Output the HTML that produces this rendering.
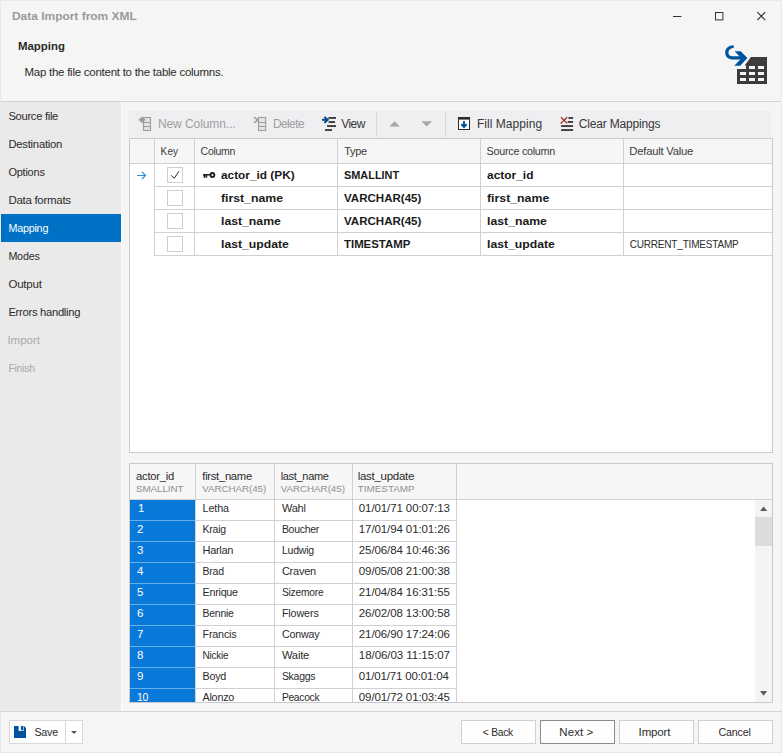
<!DOCTYPE html>
<html><head><meta charset="utf-8"><title>Data Import from XML</title>
<style>
html,body{margin:0;padding:0;}
body{width:782px;height:753px;overflow:hidden;background:#f5f5f5;font-family:"Liberation Sans","DejaVu Sans",sans-serif;font-size:11.5px;color:#222;position:relative;}
.a{position:absolute;}
.t{position:absolute;white-space:nowrap;line-height:16px;height:16px;}
.v{position:absolute;width:1px;background:#d0d0d5;}
.h{position:absolute;height:1px;background:#d0d0d5;}
.btn{position:absolute;box-sizing:border-box;background:#fefefe;border:1px solid #d0d0d0;}
svg{position:absolute;left:0;top:0;}
</style></head><body>
<!-- header -->
<div class="a" style="left:0;top:0;width:782px;height:101px;background:#f5f5f5;"></div>
<div class="h" style="left:0;top:101px;width:781px;background:#d2d2d2;"></div>
<div class="a" style="left:0;top:0;width:782px;height:753px;box-sizing:border-box;border:1px solid #e9e9e9;"></div>
<!-- sidebar -->
<div class="a" style="left:1px;top:102px;width:120px;height:609px;background:#eaeaea;"></div>
<div class="a" style="left:121px;top:102px;width:2px;height:609px;background:#fafafa;"></div>
<div class="a" style="left:1px;top:214px;width:120px;height:28px;background:#0072c6;"></div>
<!-- toolbar -->
<div class="a" style="left:128px;top:111px;width:643px;height:27px;background:#efeff1;"></div>
<div class="v" style="left:376px;top:112px;height:25px;background:#d9d9d9;"></div>
<div class="v" style="left:445px;top:112px;height:25px;background:#d9d9d9;"></div>
<!-- top grid -->
<div class="a" style="left:129px;top:138px;width:644px;height:315px;box-sizing:border-box;border:1px solid #cacace;background:#fff;"></div>
<div class="a" style="left:130px;top:139px;width:642px;height:24px;background:#f6f6f6;"></div>
<div class="h" style="left:130px;top:163px;width:642px;"></div>
<div class="h" style="left:154px;top:186px;width:618px;"></div>
<div class="h" style="left:154px;top:209px;width:618px;"></div>
<div class="h" style="left:154px;top:232px;width:618px;"></div>
<div class="h" style="left:154px;top:255px;width:618px;"></div>
<div class="v" style="left:154px;top:139px;height:117px;"></div>
<div class="v" style="left:194px;top:139px;height:117px;"></div>
<div class="v" style="left:337px;top:139px;height:117px;"></div>
<div class="v" style="left:480px;top:139px;height:117px;"></div>
<div class="v" style="left:623px;top:139px;height:117px;"></div>
<!-- checkboxes -->
<div class="a" style="left:167px;top:167px;width:16px;height:16px;box-sizing:border-box;border:1px solid #cecece;background:#fff;"></div>
<div class="a" style="left:167px;top:190px;width:16px;height:16px;box-sizing:border-box;border:1px solid #cecece;background:#fff;"></div>
<div class="a" style="left:167px;top:213px;width:16px;height:16px;box-sizing:border-box;border:1px solid #cecece;background:#fff;"></div>
<div class="a" style="left:167px;top:236px;width:16px;height:16px;box-sizing:border-box;border:1px solid #cecece;background:#fff;"></div>
<!-- lower grid -->
<div class="a" style="left:129px;top:463px;width:644px;height:240px;box-sizing:border-box;border:1px solid #cacace;background:#fff;"></div>
<div class="a" style="left:130px;top:464px;width:642px;height:35px;background:#f6f6f6;"></div>
<div class="h" style="left:130px;top:499px;width:642px;"></div>
<div class="a" style="left:130px;top:500px;width:65px;height:202px;background:#0879d8;"></div>
<div id="rl"></div>
<div class="v" style="left:195px;top:464px;height:238px;"></div>
<div class="v" style="left:274px;top:464px;height:238px;"></div>
<div class="v" style="left:352px;top:464px;height:238px;"></div>
<div class="v" style="left:456px;top:464px;height:238px;"></div>
<!-- scrollbar -->
<div class="a" style="left:755px;top:500px;width:17px;height:202px;background:#f4f4f4;"></div>
<div class="a" style="left:755px;top:517px;width:17px;height:29px;background:#dcdcdf;"></div>
<!-- footer -->
<div class="h" style="left:0;top:711px;width:782px;background:#d6d6d6;"></div>
<div class="btn" style="left:9px;top:720px;width:74px;height:24px;border-color:#d8d8d8;"></div>
<div class="v" style="left:65px;top:721px;height:22px;background:#d8d8d8;"></div>
<div class="btn" style="left:461px;top:720px;width:75px;height:24px;"></div>
<div class="btn" style="left:540px;top:720px;width:75px;height:24px;border-color:#8a8a8a;"></div>
<div class="btn" style="left:619px;top:720px;width:75px;height:24px;"></div>
<div class="btn" style="left:698px;top:720px;width:75px;height:24px;"></div>
<div class="h" style="left:195px;top:520px;width:261px;"></div>
<div class="h" style="left:130px;top:520px;width:65px;background:#62b1ec;"></div>
<div class="h" style="left:195px;top:541px;width:261px;"></div>
<div class="h" style="left:130px;top:541px;width:65px;background:#62b1ec;"></div>
<div class="h" style="left:195px;top:562px;width:261px;"></div>
<div class="h" style="left:130px;top:562px;width:65px;background:#62b1ec;"></div>
<div class="h" style="left:195px;top:583px;width:261px;"></div>
<div class="h" style="left:130px;top:583px;width:65px;background:#62b1ec;"></div>
<div class="h" style="left:195px;top:604px;width:261px;"></div>
<div class="h" style="left:130px;top:604px;width:65px;background:#62b1ec;"></div>
<div class="h" style="left:195px;top:625px;width:261px;"></div>
<div class="h" style="left:130px;top:625px;width:65px;background:#62b1ec;"></div>
<div class="h" style="left:195px;top:646px;width:261px;"></div>
<div class="h" style="left:130px;top:646px;width:65px;background:#62b1ec;"></div>
<div class="h" style="left:195px;top:667px;width:261px;"></div>
<div class="h" style="left:130px;top:667px;width:65px;background:#62b1ec;"></div>
<div class="h" style="left:195px;top:688px;width:261px;"></div>
<div class="h" style="left:130px;top:688px;width:65px;background:#62b1ec;"></div>
<div class="t" style="left:11.90px;top:8.00px;font-size:11.5px;letter-spacing:0.000px;color:#9a9a9a;font-weight:bold;transform:scaleX(1.0384);transform-origin:0 12.00px;">Data Import from XML</div>
<div class="t" style="left:17.60px;top:38.30px;font-size:11.5px;letter-spacing:0.000px;color:#2c2c2c;font-weight:bold;transform:scaleX(0.9927);transform-origin:0 12.00px;">Mapping</div>
<div class="t" style="left:24.50px;top:63.80px;font-size:11.5px;letter-spacing:-0.258px;color:#2c2c2c;">Map the file content to the table columns.</div>
<div class="t" style="left:8.40px;top:107.90px;font-size:11.25px;letter-spacing:-0.320px;color:#2c2c2c;transform:scaleY(1.0222);transform-origin:0 12.00px;">Source file</div>
<div class="t" style="left:8.40px;top:135.90px;font-size:11.25px;letter-spacing:-0.233px;color:#2c2c2c;transform:scaleY(1.0222);transform-origin:0 12.00px;">Destination</div>
<div class="t" style="left:8.40px;top:163.90px;font-size:11px;letter-spacing:-0.235px;color:#2c2c2c;transform:scaleY(1.0455);transform-origin:0 12.00px;">Options</div>
<div class="t" style="left:8.40px;top:191.90px;font-size:11.5px;letter-spacing:-0.289px;color:#2c2c2c;">Data formats</div>
<div class="t" style="left:8.40px;top:219.90px;font-size:10.75px;letter-spacing:-0.210px;color:#fff;transform:scaleY(1.0698);transform-origin:0 12.00px;">Mapping</div>
<div class="t" style="left:8.40px;top:247.90px;font-size:10.75px;letter-spacing:-0.223px;color:#2c2c2c;transform:scaleY(1.0698);transform-origin:0 12.00px;">Modes</div>
<div class="t" style="left:8.40px;top:275.90px;font-size:11.5px;letter-spacing:-0.185px;color:#2c2c2c;">Output</div>
<div class="t" style="left:8.40px;top:303.90px;font-size:11.25px;letter-spacing:-0.302px;color:#2c2c2c;transform:scaleY(1.0222);transform-origin:0 12.00px;">Errors handling</div>
<div class="t" style="left:7.40px;top:331.90px;font-size:11.5px;letter-spacing:0.001px;color:#a9a9a9;">Import</div>
<div class="t" style="left:8.40px;top:359.90px;font-size:10.5px;letter-spacing:-0.274px;color:#a9a9a9;transform:scaleY(1.0952);transform-origin:0 12.00px;">Finish</div>
<div class="t" style="left:157.90px;top:115.50px;font-size:12px;letter-spacing:-0.071px;color:#9e9e9e;">New Column...</div>
<div class="t" style="left:272.90px;top:115.50px;font-size:12px;letter-spacing:-0.603px;color:#9e9e9e;">Delete</div>
<div class="t" style="left:341.30px;top:115.50px;font-size:12px;letter-spacing:-0.576px;color:#363636;">View</div>
<div class="t" style="left:476.90px;top:115.50px;font-size:12px;letter-spacing:0.044px;color:#363636;">Fill Mapping</div>
<div class="t" style="left:578.80px;top:115.50px;font-size:12px;letter-spacing:-0.180px;color:#363636;">Clear Mappings</div>
<div class="t" style="left:160.60px;top:143.80px;font-size:10px;letter-spacing:0.134px;color:#3c3c3c;transform:scaleY(1.1500);transform-origin:0 11.00px;">Key</div>
<div class="t" style="left:200.60px;top:142.80px;font-size:10.5px;letter-spacing:-0.288px;color:#3c3c3c;transform:scaleY(1.0952);transform-origin:0 12.00px;">Column</div>
<div class="t" style="left:344.20px;top:142.80px;font-size:11px;letter-spacing:-0.310px;color:#3c3c3c;transform:scaleY(1.0455);transform-origin:0 12.00px;">Type</div>
<div class="t" style="left:486.60px;top:142.80px;font-size:10.75px;letter-spacing:-0.252px;color:#3c3c3c;transform:scaleY(1.0698);transform-origin:0 12.00px;">Source column</div>
<div class="t" style="left:629.30px;top:142.80px;font-size:11.25px;letter-spacing:-0.221px;color:#3c3c3c;transform:scaleY(1.0222);transform-origin:0 12.00px;">Default Value</div>
<div class="t" style="left:221.30px;top:166.60px;font-size:11.5px;letter-spacing:0.000px;color:#1a1a1a;font-weight:bold;transform:scaleX(1.0288);transform-origin:0 12.00px;">actor_id (PK)</div>
<div class="t" style="left:344.20px;top:166.60px;font-size:11.5px;letter-spacing:0.000px;color:#1a1a1a;font-weight:bold;transform:scaleX(0.9483);transform-origin:0 12.00px;">SMALLINT</div>
<div class="t" style="left:487.20px;top:166.60px;font-size:11.5px;letter-spacing:0.000px;color:#1a1a1a;font-weight:bold;transform:scaleX(1.0378);transform-origin:0 12.00px;">actor_id</div>
<div class="t" style="left:221.30px;top:189.60px;font-size:11.5px;letter-spacing:0.000px;color:#1a1a1a;font-weight:bold;transform:scaleX(1.0681);transform-origin:0 12.00px;">first_name</div>
<div class="t" style="left:344.20px;top:189.60px;font-size:11.5px;letter-spacing:0.000px;color:#1a1a1a;font-weight:bold;transform:scaleX(1.0030);transform-origin:0 12.00px;">VARCHAR(45)</div>
<div class="t" style="left:487.20px;top:189.60px;font-size:11.5px;letter-spacing:0.000px;color:#1a1a1a;font-weight:bold;transform:scaleX(1.0698);transform-origin:0 12.00px;">first_name</div>
<div class="t" style="left:221.30px;top:212.60px;font-size:11.5px;letter-spacing:0.000px;color:#1a1a1a;font-weight:bold;transform:scaleX(1.0634);transform-origin:0 12.00px;">last_name</div>
<div class="t" style="left:344.20px;top:212.60px;font-size:11.5px;letter-spacing:0.000px;color:#1a1a1a;font-weight:bold;transform:scaleX(1.0030);transform-origin:0 12.00px;">VARCHAR(45)</div>
<div class="t" style="left:487.20px;top:212.60px;font-size:11.5px;letter-spacing:0.000px;color:#1a1a1a;font-weight:bold;transform:scaleX(1.0652);transform-origin:0 12.00px;">last_name</div>
<div class="t" style="left:221.30px;top:235.60px;font-size:11.5px;letter-spacing:0.000px;color:#1a1a1a;font-weight:bold;transform:scaleX(1.0612);transform-origin:0 12.00px;">last_update</div>
<div class="t" style="left:344.20px;top:235.60px;font-size:11.5px;letter-spacing:0.000px;color:#1a1a1a;font-weight:bold;transform:scaleX(0.9911);transform-origin:0 12.00px;">TIMESTAMP</div>
<div class="t" style="left:487.20px;top:235.60px;font-size:11.5px;letter-spacing:0.000px;color:#1a1a1a;font-weight:bold;transform:scaleX(1.0628);transform-origin:0 12.00px;">last_update</div>
<div class="t" style="left:629.70px;top:236.80px;font-size:10px;letter-spacing:-0.186px;color:#2c2c2c;transform:scaleY(1.1500);transform-origin:0 11.00px;">CURRENT_TIMESTAMP</div>
<div class="t" style="left:136.00px;top:467.70px;font-size:11.25px;letter-spacing:-0.238px;color:#2c2c2c;transform:scaleY(1.0222);transform-origin:0 12.00px;">actor_id</div>
<div class="t" style="left:136.00px;top:481.10px;font-size:9.8px;letter-spacing:-0.075px;color:#8f8f8f;">SMALLINT</div>
<div class="t" style="left:202.30px;top:467.70px;font-size:11.25px;letter-spacing:-0.296px;color:#2c2c2c;transform:scaleY(1.0222);transform-origin:0 12.00px;">first_name</div>
<div class="t" style="left:202.30px;top:481.10px;font-size:9.8px;letter-spacing:-0.064px;color:#8f8f8f;">VARCHAR(45)</div>
<div class="t" style="left:280.70px;top:467.70px;font-size:11px;letter-spacing:-0.317px;color:#2c2c2c;transform:scaleY(1.0455);transform-origin:0 12.00px;">last_name</div>
<div class="t" style="left:280.70px;top:481.10px;font-size:9.8px;letter-spacing:-0.034px;color:#8f8f8f;">VARCHAR(45)</div>
<div class="t" style="left:357.70px;top:467.70px;font-size:11.5px;letter-spacing:-0.277px;color:#2c2c2c;">last_update</div>
<div class="t" style="left:357.70px;top:481.10px;font-size:9.8px;letter-spacing:0.051px;color:#8f8f8f;">TIMESTAMP</div>
<div class="t" style="left:137.90px;top:499.80px;font-size:11.5px;letter-spacing:-0.250px;color:#fff;">1</div>
<div class="t" style="left:202.50px;top:499.80px;font-size:10.75px;letter-spacing:-0.081px;color:#2c2c2c;transform:scaleY(1.0698);transform-origin:0 12.00px;">Letha</div>
<div class="t" style="left:281.90px;top:499.80px;font-size:11px;letter-spacing:-0.203px;color:#2c2c2c;transform:scaleY(1.0455);transform-origin:0 12.00px;">Wahl</div>
<div class="t" style="left:358.80px;top:499.80px;font-size:11.5px;letter-spacing:-0.102px;color:#2c2c2c;">01/01/71 00:07:13</div>
<div class="t" style="left:137.00px;top:520.80px;font-size:11.5px;letter-spacing:-0.250px;color:#fff;">2</div>
<div class="t" style="left:202.50px;top:520.80px;font-size:10.5px;letter-spacing:-0.218px;color:#2c2c2c;transform:scaleY(1.0952);transform-origin:0 12.00px;">Kraig</div>
<div class="t" style="left:281.90px;top:520.80px;font-size:10.5px;letter-spacing:-0.285px;color:#2c2c2c;transform:scaleY(1.0952);transform-origin:0 12.00px;">Boucher</div>
<div class="t" style="left:358.80px;top:520.80px;font-size:11.5px;letter-spacing:-0.102px;color:#2c2c2c;">17/01/94 01:01:26</div>
<div class="t" style="left:137.00px;top:541.80px;font-size:11.5px;letter-spacing:-0.250px;color:#fff;">3</div>
<div class="t" style="left:202.50px;top:541.80px;font-size:11px;letter-spacing:-0.317px;color:#2c2c2c;transform:scaleY(1.0455);transform-origin:0 12.00px;">Harlan</div>
<div class="t" style="left:281.90px;top:541.80px;font-size:10.5px;letter-spacing:-0.207px;color:#2c2c2c;transform:scaleY(1.0952);transform-origin:0 12.00px;">Ludwig</div>
<div class="t" style="left:358.80px;top:541.80px;font-size:11.5px;letter-spacing:-0.102px;color:#2c2c2c;">25/06/84 10:46:36</div>
<div class="t" style="left:137.00px;top:562.80px;font-size:11.5px;letter-spacing:-0.250px;color:#fff;">4</div>
<div class="t" style="left:202.50px;top:562.80px;font-size:10.5px;letter-spacing:-0.213px;color:#2c2c2c;transform:scaleY(1.0952);transform-origin:0 12.00px;">Brad</div>
<div class="t" style="left:281.90px;top:562.80px;font-size:11px;letter-spacing:-0.228px;color:#2c2c2c;transform:scaleY(1.0455);transform-origin:0 12.00px;">Craven</div>
<div class="t" style="left:358.80px;top:562.80px;font-size:11.5px;letter-spacing:-0.102px;color:#2c2c2c;">09/05/08 21:00:38</div>
<div class="t" style="left:137.00px;top:583.80px;font-size:11.5px;letter-spacing:-0.250px;color:#fff;">5</div>
<div class="t" style="left:202.50px;top:583.80px;font-size:10.75px;letter-spacing:-0.246px;color:#2c2c2c;transform:scaleY(1.0698);transform-origin:0 12.00px;">Enrique</div>
<div class="t" style="left:281.90px;top:584.80px;font-size:10.25px;letter-spacing:-0.227px;color:#2c2c2c;transform:scaleY(1.1220);transform-origin:0 11.00px;">Sizemore</div>
<div class="t" style="left:358.80px;top:583.80px;font-size:11.5px;letter-spacing:-0.102px;color:#2c2c2c;">21/04/84 16:31:55</div>
<div class="t" style="left:137.00px;top:604.80px;font-size:11.5px;letter-spacing:-0.250px;color:#fff;">6</div>
<div class="t" style="left:202.50px;top:604.80px;font-size:10.5px;letter-spacing:-0.251px;color:#2c2c2c;transform:scaleY(1.0952);transform-origin:0 12.00px;">Bennie</div>
<div class="t" style="left:281.90px;top:604.80px;font-size:10.75px;letter-spacing:-0.126px;color:#2c2c2c;transform:scaleY(1.0698);transform-origin:0 12.00px;">Flowers</div>
<div class="t" style="left:358.80px;top:604.80px;font-size:11.5px;letter-spacing:-0.102px;color:#2c2c2c;">26/02/08 13:00:58</div>
<div class="t" style="left:137.00px;top:625.80px;font-size:11.5px;letter-spacing:-0.250px;color:#fff;">7</div>
<div class="t" style="left:202.50px;top:625.80px;font-size:10.75px;letter-spacing:-0.178px;color:#2c2c2c;transform:scaleY(1.0698);transform-origin:0 12.00px;">Francis</div>
<div class="t" style="left:281.90px;top:625.80px;font-size:10.75px;letter-spacing:-0.233px;color:#2c2c2c;transform:scaleY(1.0698);transform-origin:0 12.00px;">Conway</div>
<div class="t" style="left:358.80px;top:625.80px;font-size:11.5px;letter-spacing:-0.102px;color:#2c2c2c;">21/06/90 17:24:06</div>
<div class="t" style="left:137.00px;top:646.80px;font-size:11.5px;letter-spacing:-0.250px;color:#fff;">8</div>
<div class="t" style="left:202.50px;top:647.80px;font-size:10px;letter-spacing:-0.213px;color:#2c2c2c;transform:scaleY(1.1500);transform-origin:0 11.00px;">Nickie</div>
<div class="t" style="left:281.90px;top:646.80px;font-size:11.25px;letter-spacing:-0.221px;color:#2c2c2c;transform:scaleY(1.0222);transform-origin:0 12.00px;">Waite</div>
<div class="t" style="left:358.80px;top:646.80px;font-size:11.5px;letter-spacing:-0.048px;color:#2c2c2c;">18/06/03 11:15:07</div>
<div class="t" style="left:137.00px;top:667.80px;font-size:11.5px;letter-spacing:-0.250px;color:#fff;">9</div>
<div class="t" style="left:202.50px;top:667.80px;font-size:10.75px;letter-spacing:-0.241px;color:#2c2c2c;transform:scaleY(1.0698);transform-origin:0 12.00px;">Boyd</div>
<div class="t" style="left:281.90px;top:667.80px;font-size:10.5px;letter-spacing:-0.274px;color:#2c2c2c;transform:scaleY(1.0952);transform-origin:0 12.00px;">Skaggs</div>
<div class="t" style="left:358.80px;top:667.80px;font-size:11.5px;letter-spacing:-0.164px;color:#2c2c2c;">01/01/71 00:01:04</div>
<div class="t" style="left:137.00px;top:688.80px;font-size:10.5px;letter-spacing:-0.240px;color:#fff;transform:scaleY(1.0952);transform-origin:0 12.00px;">10</div>
<div class="t" style="left:202.50px;top:688.80px;font-size:10.75px;letter-spacing:-0.218px;color:#2c2c2c;transform:scaleY(1.0698);transform-origin:0 12.00px;">Alonzo</div>
<div class="t" style="left:281.90px;top:689.80px;font-size:10.25px;letter-spacing:-0.281px;color:#2c2c2c;transform:scaleY(1.1220);transform-origin:0 11.00px;">Peacock</div>
<div class="t" style="left:358.80px;top:688.80px;font-size:11.5px;letter-spacing:-0.102px;color:#2c2c2c;">09/01/72 01:03:45</div>
<div class="t" style="left:34.40px;top:724.00px;font-size:10.75px;letter-spacing:-0.241px;color:#2c2c2c;transform:scaleY(1.0698);transform-origin:0 12.00px;">Save</div>
<div class="t" style="left:482.80px;top:724.90px;font-size:10.25px;letter-spacing:-0.239px;color:#2c2c2c;transform:scaleY(1.1220);transform-origin:0 11.00px;">&lt; Back</div>
<div class="t" style="left:559.30px;top:723.90px;font-size:11.5px;letter-spacing:0.072px;color:#2c2c2c;">Next &gt;</div>
<div class="t" style="left:638.60px;top:723.90px;font-size:11.5px;letter-spacing:-0.139px;color:#2c2c2c;">Import</div>
<div class="t" style="left:718.50px;top:723.90px;font-size:10.75px;letter-spacing:-0.215px;color:#2c2c2c;transform:scaleY(1.0698);transform-origin:0 12.00px;">Cancel</div>
<!--SVGSTART--><svg width="782" height="753" viewBox="0 0 782 753">
<!-- window controls -->
<rect x="673" y="16" width="8.4" height="1" fill="#333"/>
<rect x="715.5" y="12.5" width="7.4" height="7.4" fill="none" stroke="#333" stroke-width="1"/>
<path d="M757.3 12.2 L765.2 20.1 M765.2 12.2 L757.3 20.1" stroke="#333" stroke-width="1.1" fill="none"/>
<!-- header icon: table -->
<path d="M751 57 H767 V84 H737 V69 H746 V65.6 H744.6 Z" fill="#3c3c3c"/>
<g fill="#f5f5f5">
<rect x="749" y="66" width="6" height="3"/><rect x="758" y="66" width="6" height="3"/>
<rect x="740" y="72" width="6" height="3"/><rect x="749" y="72" width="6" height="3"/><rect x="758" y="72" width="6" height="3"/>
<rect x="740" y="78" width="6" height="3"/><rect x="749" y="78" width="6" height="3"/><rect x="758" y="78" width="6" height="3"/>
</g>
<!-- header icon: arrow (halo + arrow) -->
<g>
<path id="arw" d="M733.7 45.2 C728.6 45.2 725.2 48.4 725.2 52.6 C725.2 56.6 728 59.4 732 59.4 H740.3 L734.3 65.7 H740.2 L747.4 58.1 L740.7 51.3 H734.6 L739.4 56.3 H732.2 C730 56.3 728.4 54.8 728.4 52.7 C728.4 50.3 730.3 48 733.7 48 Z" fill="#00539f" stroke="#f5f5f5" stroke-width="2.4" paint-order="stroke"/>
</g>
<!-- toolbar: new column (disabled) -->
<g fill="none" stroke="#9c9c9c" stroke-width="1.1">
<rect x="143.5" y="117.5" width="7" height="13" fill="#e2e2e2"/>
<path d="M143.5 122.5 H150.5 M143.5 126.5 H150.5"/>
</g>
<path d="M138.8 119.8 H145 M141.8 117 V122.8" stroke="#989898" stroke-width="2" fill="none"/>
<!-- toolbar: delete (disabled) -->
<path d="M254 117.2 L262 122.8 M254 122.8 L262 117.2" stroke="#999" stroke-width="1.5" fill="none"/>
<g fill="none" stroke="#9c9c9c" stroke-width="1.1">
<rect x="258.5" y="117.5" width="7.2" height="13" fill="#e4e4e6"/>
<path d="M258.5 122.5 H265.5 M258.5 126.5 H265.5"/>
</g>
<!-- toolbar: view -->
<g fill="#2b2b2b">
<rect x="328.4" y="117.1" width="7.6" height="1.7"/>
<rect x="328.6" y="121.2" width="6.4" height="1.7"/>
<rect x="327" y="125.2" width="9" height="1.7"/>
<rect x="325" y="129.2" width="7" height="1.7"/>
</g>
<path d="M322 119.8 H327.4 M324.4 116.9 L327.8 119.8 L324.4 122.7" stroke="#004a88" stroke-width="1.9" fill="none"/>
<!-- toolbar: up/down triangles -->
<path d="M389.3 126.6 L394.6 121.3 L399.9 126.6 Z" fill="#a9a9a9"/>
<path d="M421.3 121.3 L432.1 121.3 L426.7 126.6 Z" fill="#a9a9a9"/>
<!-- toolbar: fill mapping -->
<rect x="458.5" y="117.5" width="11" height="12" fill="#fff" stroke="#2b2b2b" stroke-width="1"/>
<rect x="458" y="117" width="12" height="2.6" fill="#2b2b2b"/>
<path d="M464 121 V127 M461.3 124.2 L464 127.2 L466.7 124.2" stroke="#004f96" stroke-width="1.9" fill="none"/>
<!-- toolbar: clear mappings -->
<g fill="#2b2b2b">
<rect x="568.5" y="117.1" width="4.6" height="1.7"/>
<rect x="567.8" y="121.1" width="5.3" height="1.7"/>
<rect x="561.1" y="125.2" width="12" height="1.7"/>
<rect x="561.1" y="129.2" width="12" height="1.7"/>
</g>
<path d="M561 117.3 L567.3 123.4 M567.2 117.3 L560.6 123.6" stroke="#a82828" stroke-width="1.3" fill="none"/>
<!-- row indicator arrow -->
<path d="M137 175.5 H145.5 M142 172 L145.6 175.5 L142 179" stroke="#2f8fd3" stroke-width="1.1" fill="none"/>
<!-- check mark -->
<path d="M171.2 175.3 L174.2 178.3 L179 171.2" stroke="#2b2b2b" stroke-width="1" fill="none"/>
<!-- key icon -->
<circle cx="212.4" cy="175" r="1.95" fill="none" stroke="#222" stroke-width="1.9"/>
<path d="M203 174.8 H210.4 M204.4 174.8 V177.8 M206.4 174.8 V177.8" stroke="#222" stroke-width="1.6" fill="none"/>
<!-- scrollbar arrows -->
<path d="M760.2 511 L763.6 506.5 L767 511 Z" fill="#5a5a5a"/>
<path d="M760.1 691 L767.1 691 L763.6 695.8 Z" fill="#5a5a5a"/>
<!-- save icon -->
<path d="M14 726 H24 L26 728 V738 H14 Z" fill="#00539f"/>
<rect x="18.6" y="725.5" width="5" height="5.4" fill="#fefefe"/>
<rect x="21" y="725.9" width="2" height="4.3" fill="#00539f"/>
<!-- save dropdown arrow -->
<path d="M71 731 L77 731 L74 734 Z" fill="#555"/>
</svg>
<!--SVGEND-->
</body></html>
